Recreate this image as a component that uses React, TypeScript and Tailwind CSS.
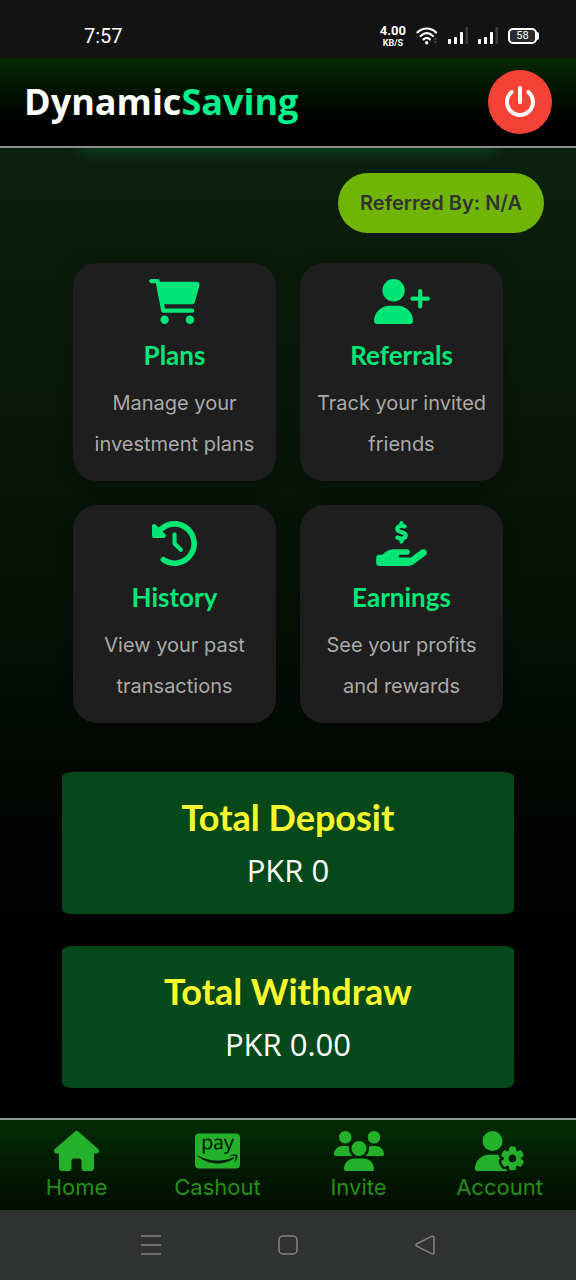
import type { ComponentType } from "react";
import {
  FaCcAmazonPay,
  FaClockRotateLeft,
  FaHandHoldingDollar,
  FaHouse,
  FaPowerOff,
  FaUserGear,
  FaUserPlus,
  FaUsers,
} from "react-icons/fa6";

type Icon = ComponentType<{ className?: string }>;

function Cart({ className }: { className?: string }) {
  return (
    <svg viewBox="0 0 576 512" fill="currentColor" className={className} aria-hidden="true">
      <path d="M96 0C107.5 0 117.4 8.19 119.6 19.51L121.1 32H541.8C562.1 32 578.3 52.25 572.6 72.66L518.6 264.7C514.7 278.5 502.1 288 487.8 288H170.7L179.9 336H488C501.3 336 512 346.7 512 360C512 373.3 501.3 384 488 384H159.1C148.5 384 138.6 375.8 136.4 364.5L76.14 48H24C10.75 48 0 37.25 0 24C0 10.75 10.75 0 24 0H96zM128 464C128 437.5 149.5 416 176 416C202.5 416 224 437.5 224 464C224 490.5 202.5 512 176 512C149.5 512 128 490.5 128 464zM512 464C512 490.5 490.5 512 464 512C437.5 512 416 490.5 416 464C416 437.5 437.5 416 464 416C490.5 416 512 437.5 512 464z" />
    </svg>
  );
}

const features: { title: string; lines: [string, string]; icon: Icon; width: string }[] = [
  { title: "Plans", lines: ["Manage your", "investment plans"], icon: Cart, width: "w-[51px]" },
  { title: "Referrals", lines: ["Track your invited", "friends"], icon: FaUserPlus, width: "w-14" },
  { title: "History", lines: ["View your past", "transactions"], icon: FaClockRotateLeft, width: "w-[45px]" },
  { title: "Earnings", lines: ["See your profits", "and rewards"], icon: FaHandHoldingDollar, width: "w-[51px]" },
];

const totals = [
  { label: "Total Deposit", value: "PKR 0" },
  { label: "Total Withdraw", value: "PKR 0.00" },
];

const tabs: { label: string; icon: Icon; width: string }[] = [
  { label: "Home", icon: FaHouse, width: "w-[45px]" },
  { label: "Cashout", icon: FaCcAmazonPay, width: "w-[45px]" },
  { label: "Invite", icon: FaUsers, width: "w-[50px]" },
  { label: "Account", icon: FaUserGear, width: "w-[50px]" },
];

function Signal() {
  return (
    <svg viewBox="0 0 20 18" className="h-[18px] w-5" aria-hidden="true">
      <g fill="#fff">
        <rect x="0" y="12" width="3" height="5" rx="0.8" />
        <rect x="6" y="10" width="3" height="7" rx="0.8" />
        <rect x="12" y="5" width="3" height="12" rx="0.8" />
      </g>
      <rect x="17.5" y="0" width="2.5" height="17" rx="0.8" fill="#3c3c3c" />
    </svg>
  );
}

function Wifi() {
  return (
    <svg viewBox="0 0 22 18" className="h-[18px] w-[22px]" fill="none" aria-hidden="true">
      <g stroke="#fff" strokeWidth="2.2" strokeLinecap="round">
        <path d="M1.5 5.4C7 .2 14.5 .2 20 5.4" />
        <path d="M4.6 9C8.5 5.4 13 5.4 16.9 9" />
        <path d="M7.6 12.4c2-1.9 4.3-1.9 6.3 0" />
      </g>
      <circle cx="10.7" cy="15.8" r="1.7" fill="#fff" />
      <path d="M17.5 12.5l2-2 2 2zM17.5 14.5l2 2 2-2z" fill="#555" />
    </svg>
  );
}

function StatusBar() {
  return (
    <div className="flex h-[58px] items-center justify-between bg-[#131313] pt-[14px] pr-[37px] pl-[84px] font-[Roboto,sans-serif] text-white">
      <span className="text-xl leading-6">7:57</span>
      <div className="flex items-center gap-2.5">
        <div className="flex flex-col items-center font-bold">
          <span className="text-[13px] leading-[14px]">4.00</span>
          <span className="text-[9px] leading-[11px]">KB/S</span>
        </div>
        <Wifi />
        <Signal />
        <Signal />
        <div className="flex items-center">
          <span className="flex h-4 w-[29px] items-center justify-center rounded-[5px] border-2 border-white bg-[#2b2b2b] text-[11px] leading-3">
            58
          </span>
          <span className="h-2 w-0.5 rounded-r bg-white" />
        </div>
      </div>
    </div>
  );
}

function Header() {
  return (
    <header className="flex h-[90px] items-center justify-between border-b-2 border-[#8b8f8b] bg-linear-to-b from-[#032c03] to-black px-6">
      <h1 className="font-['Open_Sans',sans-serif] text-4xl font-bold text-white">
        Dynamic<span className="text-[#05f08c]">Saving</span>
      </h1>
      <button
        type="button"
        aria-label="Log out"
        className="flex size-16 items-center justify-center rounded-full bg-[#f44336] text-white"
      >
        <FaPowerOff className="size-8" />
      </button>
    </header>
  );
}

export default function App() {
  return (
    <div className="flex min-h-screen flex-col bg-black font-[Inter,sans-serif]">
      <StatusBar />
      <Header />
      <main className="relative flex grow flex-col overflow-hidden bg-linear-to-b from-[#0b200d] via-[#061007] to-black pt-[25px] pb-[29px]">
        <div className="absolute inset-x-20 -top-4 h-4 rounded-full shadow-[0_2px_16px_#0f6b3caa]" />
        <div className="mr-8 self-end rounded-full bg-[#70b405] px-[22px] py-[15px] text-xl leading-[30px] font-semibold text-[#333]">
          Referred By: N/A
        </div>
        <div className="mx-auto mt-[30px] grid w-full max-w-[430px] grid-cols-2 gap-6">
          {features.map(({ title, lines, icon: Icon, width }) => (
            <a
              key={title}
              href="#"
              className="flex flex-col items-center rounded-3xl bg-[#1e1e1e] py-4 text-center shadow-[0_0_16px_#00000044]"
            >
              <Icon className={`h-[45px] text-[#00e676] ${width}`} />
              <h2 className="mt-4 font-[Lato,sans-serif] text-[26px] leading-[31px] font-bold text-[#00e676]">
                {title}
              </h2>
              <p className="mt-3 text-xl leading-[41px] whitespace-nowrap text-[#aaa]">
                {lines[0]}
                <br />
                {lines[1]}
              </p>
            </a>
          ))}
        </div>
        <div className="mx-auto mt-[49px] flex w-full max-w-[452px] flex-col gap-8">
          {totals.map(({ label, value }) => (
            <section
              key={label}
              className="rounded-[10px/5px] bg-[#05491b] pt-[23px] pb-[21px] text-center"
            >
              <h2 className="font-[Lato,sans-serif] text-4xl leading-[44px] font-bold text-[#faf92d]">
                {label}
              </h2>
              <p className="mt-2 font-['Open_Sans',sans-serif] text-[31px] leading-[46px] text-white">
                {value}
              </p>
            </section>
          ))}
        </div>
      </main>
      <nav className="grid h-[92px] grid-cols-4 border-t-2 border-[#8b9b8b] bg-linear-to-b from-[#032c03] to-[#010c01] px-1.5 pt-[11px]">
        {tabs.map(({ label, icon: Icon, width }) => (
          <a key={label} href="#" className="flex flex-col items-center text-[#24b12b]">
            <Icon className={`h-10 ${width}`} />
            <span className="text-[22px] leading-8 text-[#268f17]">{label}</span>
          </a>
        ))}
      </nav>
      <div className="flex h-[70px] items-center justify-center gap-[117px] bg-[#303131] text-[#858585]">
        <button type="button" aria-label="Recent apps">
          <svg viewBox="0 0 20 20" className="size-5" stroke="currentColor" strokeWidth="1.5">
            <path d="M0 1h20M0 10h20M0 19h20" />
          </svg>
        </button>
        <button type="button" aria-label="Home screen">
          <svg viewBox="0 0 20 20" className="size-5" fill="none" stroke="currentColor" strokeWidth="1.5">
            <rect x="1" y="1" width="18" height="18" rx="4" />
          </svg>
        </button>
        <button type="button" aria-label="Back">
          <svg viewBox="0 0 20 20" className="size-5" fill="none" stroke="currentColor" strokeWidth="1.5">
            <path d="M17 1.2 1.8 8.8q-1.6 1.2 0 2.4L17 18.8q2 .4 2-1.5V2.7q0-1.9-2-1.5Z" />
          </svg>
        </button>
      </div>
    </div>
  );
}
